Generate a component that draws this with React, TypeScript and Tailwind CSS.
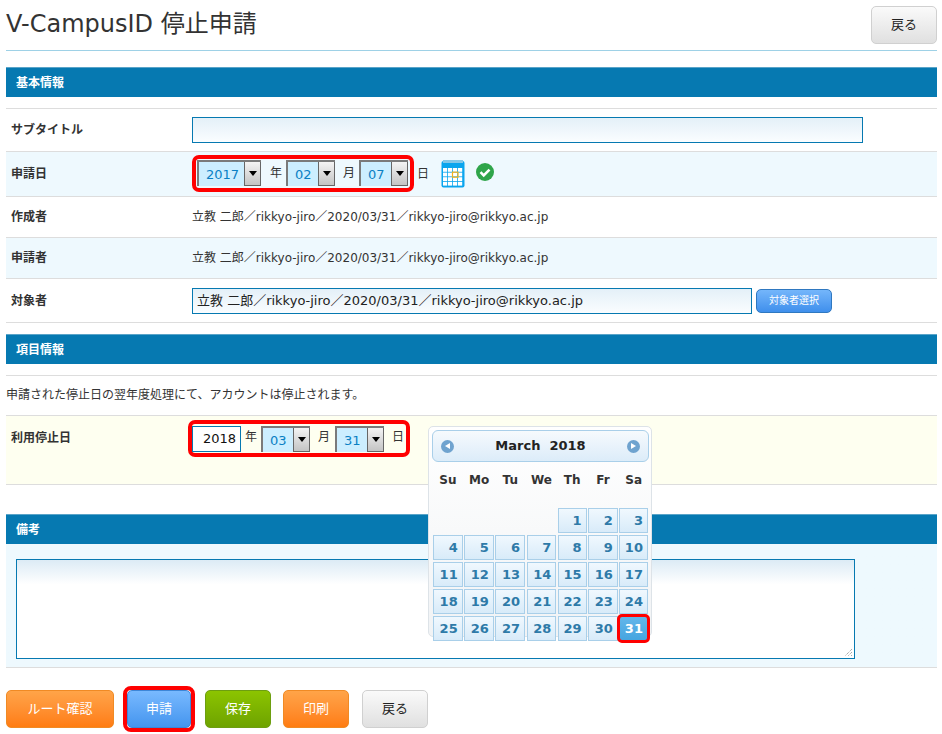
const font = { fontFamily: '"DejaVu Sans","Noto Sans CJK JP",sans-serif' };

function Sel({ v, w }: { v: string; w: string }) {
  return (
    <div className={`flex h-[26px] ${w} bg-[#cceeff] border-l-2 border-t-2 border-[#7a7a7a] text-[13px] text-[#0a80c4]`}>
      <span className="flex-1 pl-[7px] pt-[3px] leading-[20px]">{v}</span>
      <span className="flex h-full w-[17px] items-center justify-center border border-t-0 border-[#666] bg-gradient-to-b from-[#f4f4f4] to-[#c4c4c4]">
        <span className="h-0 w-0 border-x-[4px] border-t-[5px] border-x-transparent border-t-black" />
      </span>
    </div>
  );
}

function Unit({ t, cls = "" }: { t: string; cls?: string }) {
  return <span className={`text-[12px] text-[#333] ${cls}`}>{t}</span>;
}

function Section({ t, cls }: { t: string; cls: string }) {
  return (
    <div className={`flex h-[30px] items-center bg-[#0679b1] border-t border-[#5aa4c8] pl-[10px] text-[12px] font-bold text-white ${cls}`}>
      {t}
    </div>
  );
}

function Row({ label, cls, children }: { label: string; cls: string; children: React.ReactNode }) {
  return (
    <div className={`flex items-center border-b border-[#dddddd] pl-[5px] ${cls}`}>
      <span className="w-[181px] shrink-0 text-[12px] font-bold text-[#333]">{label}</span>
      {children}
    </div>
  );
}

function Btn({ t, w, cls }: { t: string; w: string; cls: string }) {
  return (
    <div className={`flex h-[38px] ${w} items-center justify-center rounded-[5px] border text-[13px] ${cls}`}>{t}</div>
  );
}

const orange = "border-[#f08a24] bg-gradient-to-b from-[#ffa448] to-[#ff7c10] text-white";
const grey = "border-[#d0d0d0] bg-gradient-to-b from-[#fafafa] to-[#e0e0e0] text-[#222]";

function CalIcon() {
  return (
    <svg width="24" height="28" viewBox="0 0 24 28" className="ml-[12px]">
      <rect x="0.5" y="1" width="23" height="26.5" rx="2" fill="#0aa5ee" />
      <rect x="2" y="0" width="20" height="3" fill="#fff" />
      <path d="M3 0v3M5 0v3M7 0v3M9 0v3M11 0v3M13 0v3M15 0v3M17 0v3M19 0v3M21 0v3" stroke="#0a8fd0" strokeWidth="1" />
      {[0, 1, 2, 3].map((r) =>
        [0, 1, 2, 3].map((c) => (
          <rect key={`${r}-${c}`} x={2 + c * 5} y={8 + r * 4.6} width="4.2" height="3.8" fill="#fff" />
        ))
      )}
      <rect x="11.5" y="12.2" width="5.5" height="5" fill="none" stroke="#f5b21a" strokeWidth="1.2" />
    </svg>
  );
}

function CheckIcon() {
  return (
    <svg width="18" height="18" viewBox="0 0 18 18" className="ml-[11px] mb-[4px]">
      <circle cx="9" cy="9" r="9" fill="#2fa54a" />
      <path d="M4.5 9.2l3.2 3.2 5.8-5.8" fill="none" stroke="#fff" strokeWidth="2.6" />
    </svg>
  );
}

function Day({ d, w }: { d: number; w: string }) {
  if (d === 31) {
    return (
      <div className={`relative h-[25px] ${w} border border-[#2f8fd0] bg-gradient-to-b from-[#62b6ea] to-[#45a5e0] pr-[4px] pt-[4px] text-right text-[13px] font-bold leading-[16px] text-white`}>
        31
        <span className="absolute -inset-[3px] rounded-[5px] border-[3px] border-[#ff0000]" />
      </div>
    );
  }
  return (
    <div className={`h-[25px] ${w} border border-[#a9cfe9] bg-gradient-to-b from-[#f0f8fe] to-[#d8ebf9] pr-[4px] pt-[4px] text-right text-[13px] font-bold leading-[16px] text-[#2e7aa8]`}>
      {d}
    </div>
  );
}

function Calendar() {
  const widths = ["w-[30px]", "w-[30px]", "w-[30px]", "w-[30px]", "w-[29px]", "w-[30px]", "w-[29px]"];
  const names = ["Su", "Mo", "Tu", "We", "Th", "Fr", "Sa"];
  const weeks: (number | null)[][] = [
    [null, null, null, null, 1, 2, 3],
    [4, 5, 6, 7, 8, 9, 10],
    [11, 12, 13, 14, 15, 16, 17],
    [18, 19, 20, 21, 22, 23, 24],
    [25, 26, 27, 28, 29, 30, 31],
  ];
  return (
    <div className="absolute left-[428px] top-[426px] h-[211px] w-[224px] rounded-[5px] border border-[#dde3e8] bg-gradient-to-b from-[#ffffff] to-[#f1f3f5] px-[3px] pt-[3px]">
      <div className="flex h-[32px] w-[217px] items-center justify-between rounded-[6px] border border-[#a9cfe9] bg-gradient-to-b from-[#f6fafd] to-[#dcecf9] px-[8px]">
        <span className="flex h-[13px] w-[13px] items-center justify-center rounded-full bg-[#6fa3cf]">
          <span className="h-0 w-0 border-y-[3.5px] border-r-[5px] border-y-transparent border-r-white" />
        </span>
        <span className="text-[13px] font-bold text-[#222]">March&nbsp;&nbsp;2018</span>
        <span className="flex h-[13px] w-[13px] items-center justify-center rounded-full bg-[#6fa3cf]">
          <span className="h-0 w-0 border-y-[3.5px] border-l-[5px] border-y-transparent border-l-white" />
        </span>
      </div>
      <div className="mt-[10px] flex h-[26px] gap-[1.5px] pl-[1px] text-center text-[12px] font-bold text-[#333]">
        {names.map((n, i) => (
          <span key={n} className={`${widths[i]} leading-[16px]`}>{n}</span>
        ))}
      </div>
      <div className="mt-[10px] flex flex-col gap-[2px] pl-[1px]">
        {weeks.map((w, r) => (
          <div key={r} className="flex gap-[1.5px]">
            {w.map((d, i) => (d === null ? <span key={i} className={widths[i]} /> : <Day key={i} d={d} w={widths[i]} />))}
          </div>
        ))}
      </div>
    </div>
  );
}

export default function App() {
  const person = "立教 二郎／rikkyo-jiro／2020/03/31／rikkyo-jiro@rikkyo.ac.jp";
  return (
    <div className="relative h-[734px] w-[942px] overflow-hidden bg-white" style={font}>
      <div className="mx-[5px] w-[932px] pl-px">
        <div className="flex h-[51px] items-start justify-between border-b border-[#9ed1e6] pt-[6px]">
          <h1 className="pt-[1px] text-[24px] leading-[34px] text-[#333]">V-CampusID 停止申請</h1>
          <Btn t="戻る" w="w-[66px]" cls={grey} />
        </div>

        <Section t="基本情報" cls="mt-[16px]" />
        <div className="mt-[11px] border-t border-[#dddddd]">
          <Row label="サブタイトル" cls="h-[43px]">
            <div className="h-[26px] w-[671px] border border-[#0679b1] bg-gradient-to-b from-[#e4f0f8] to-[#fafdff]" />
          </Row>
          <Row label="申請日" cls="h-[45px] bg-[#eef9fe]">
            <div className="flex h-[37px] w-[222px] -translate-y-px items-center rounded-[7px] border-[4px] border-[#ff0000] pl-px">
              <Sel v="2017" w="w-[64px]" />
              <Unit t="年" cls="ml-[9px] mr-[4px]" />
              <Sel v="02" w="w-[49px]" />
              <Unit t="月" cls="ml-[8px] mr-[4px]" />
              <Sel v="07" w="w-[49px]" />
            </div>
            <Unit t="日" cls="ml-[3px]" />
            <CalIcon />
            <CheckIcon />
          </Row>
          <Row label="作成者" cls="h-[41px]">
            <span className="text-[12px] text-[#333]">{person}</span>
          </Row>
          <Row label="申請者" cls="h-[41px] bg-[#eef9fe]">
            <span className="text-[12px] text-[#333]">{person}</span>
          </Row>
          <Row label="対象者" cls="h-[44px]">
            <div className="flex h-[26px] w-[560px] items-center border border-[#0679b1] bg-gradient-to-b from-[#e4f0f8] to-[#fafdff] pl-[4px] text-[13px] text-[#222]">
              {person}
            </div>
            <div className="ml-[4px] flex h-[24px] w-[76px] items-center justify-center rounded-[5px] border border-[#2f78c0] bg-gradient-to-b from-[#74b6fb] to-[#3f8fec] text-[10px] text-white">
              対象者選択
            </div>
          </Row>
        </div>

        <Section t="項目情報" cls="mt-[11px]" />
        <div className="mt-[11px] flex h-[41px] items-center border-y border-[#dddddd] pb-px text-[12px] text-[#333]">
          申請された停止日の翌年度処理にて、アカウントは停止されます。
        </div>
        <div className="flex h-[69px] items-start border-b border-[#dddddd] bg-[#fefff0] pl-[5px]">
          <span className="w-[181px] shrink-0 pt-[13px] text-[12px] font-bold text-[#333]">利用停止日</span>
          <div className="-ml-[4px] mt-[4px] flex h-[37px] w-[222px] items-center rounded-[7px] border-[4px] border-[#ff0000]">
            <div className="flex h-[26px] w-[49px] items-center justify-end border border-[#0679b1] bg-white pr-[4px] text-[13px] text-[#111]">2018</div>
            <Unit t="年" cls="ml-[4px] mr-[4px] -translate-y-[2px]" />
            <Sel v="03" w="w-[49px]" />
            <Unit t="月" cls="ml-[8px] mr-[5px] -translate-y-[2px]" />
            <Sel v="31" w="w-[49px]" />
            <Unit t="日" cls="ml-[8px] -translate-y-[2px]" />
          </div>
        </div>

        <Section t="備考" cls="mt-[29px]" />
        <div className="flex h-[124px] items-start border-b border-[#dddddd] bg-gradient-to-b from-[#eef9fe] to-[#eef9fe] pl-[10px] pt-[15px]">
          <div className="relative h-[100px] w-[839px] border border-[#0679b1] bg-gradient-to-b from-[#dcebf5] via-[#ffffff] via-[25%] to-[#ffffff]">
            <svg width="9" height="9" viewBox="0 0 9 9" className="absolute bottom-px right-px">
              <path d="M8 1L1 8M8 4L4 8M8 7L7 8" stroke="#8a8a8a" strokeWidth="1" strokeDasharray="1 1" fill="none" />
            </svg>
          </div>
        </div>

        <div className="mt-[22px] flex items-center">
          <Btn t="ルート確認" w="w-[108px]" cls={orange} />
          <div className="relative ml-[13px]">
            <Btn t="申請" w="w-[64px]" cls="border-[#3d86d8] bg-gradient-to-b from-[#78b9ff] to-[#4495ee] text-white" />
            <span className="absolute -inset-[4px] rounded-[8px] border-[4px] border-[#ff0000]" />
          </div>
          <Btn t="保存" w="w-[66px] ml-[14px]" cls="border-[#6d9e10] bg-gradient-to-b from-[#8cc400] to-[#6ea300] text-white" />
          <Btn t="印刷" w="w-[66px] ml-[12px]" cls={orange} />
          <Btn t="戻る" w="w-[66px] ml-[13px]" cls={grey} />
        </div>
      </div>
      <Calendar />
    </div>
  );
}
